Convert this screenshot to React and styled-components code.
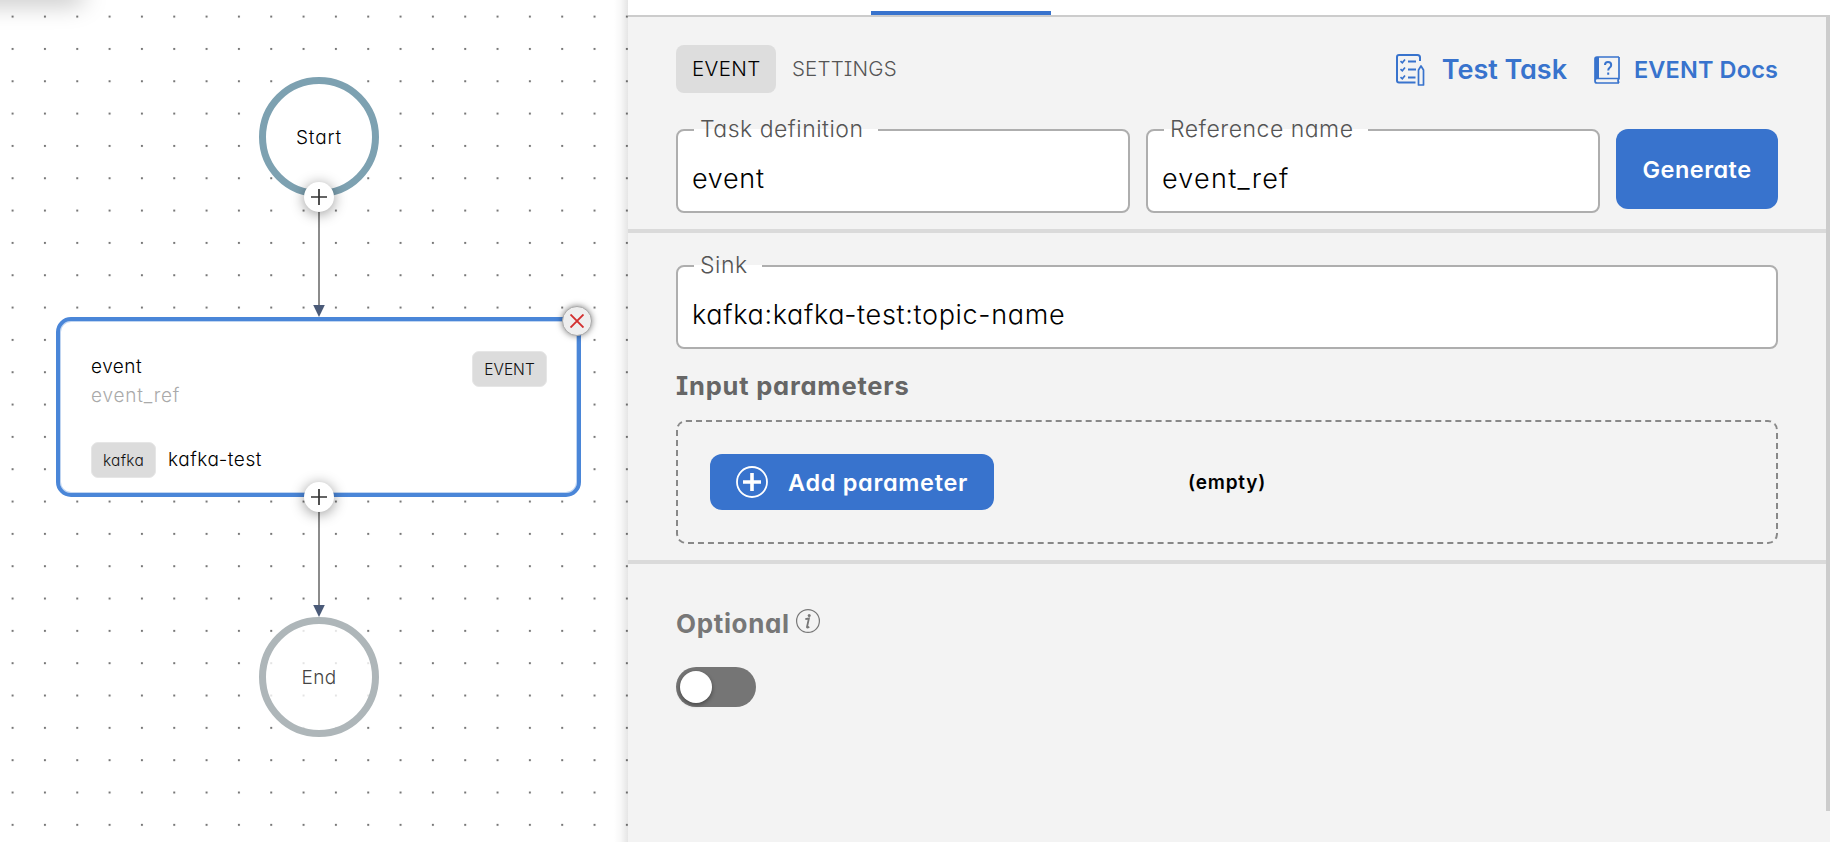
import React from "react";
import styled, { createGlobalStyle, css } from "styled-components";

const GlobalStyle = createGlobalStyle`
  * { box-sizing: border-box; }
  body {
    margin: 0;
    background: #fff;
    font-family: Inter, "Liberation Sans", sans-serif;
    font-feature-settings: "cv11", "cv08";
    -webkit-font-smoothing: antialiased;
  }
  button { font: inherit; font-feature-settings: inherit; border: 0; padding: 0; }
`;

const BLUE = "#3873cd";

const Page = styled.div`
  display: flex;
  width: 1830px;
  height: 842px;
  overflow: hidden;
`;

const tracked = css`
  letter-spacing: ${(p) => p.$track || 0}px;
  white-space: nowrap;
`;

/* ---------- workflow canvas ---------- */

const Canvas = styled.main`
  position: relative;
  flex: 0 0 628px;
  height: 842px;
  background: #fff;
  overflow: hidden;
`;

const DotGrid = styled.svg`
  position: absolute;
  inset: 0;
  width: 100%;
  height: 100%;
`;

const ToolbarShadow = styled.div`
  position: absolute;
  left: -40px;
  top: -20px;
  width: 124px;
  height: 20px;
  border-radius: 8px;
  box-shadow: 0 4px 24px rgba(0, 0, 0, 0.25);
`;

const CanvasEdge = styled.div`
  position: absolute;
  right: 0;
  top: 0;
  width: 14px;
  height: 100%;
  background: linear-gradient(to right, rgba(0, 0, 0, 0), rgba(0, 0, 0, 0.03) 50%, rgba(0, 0, 0, 0.1));
`;

const Terminal = styled.div`
  position: absolute;
  left: 259px;
  top: ${(p) => p.$top}px;
  width: 120px;
  height: 120px;
  display: flex;
  align-items: center;
  justify-content: center;
  border-radius: 50%;
  border: 7px solid ${(p) => p.$ring};
  background: ${(p) => p.$fill};
  color: ${(p) => p.$ink};
  font-size: 19px;
  font-weight: 350;
  ${tracked}
`;

const Arrow = styled.svg`
  position: absolute;
  left: 311px;
  top: ${(p) => p.$top}px;
`;

const AddNode = styled.button`
  position: absolute;
  left: 304px;
  top: ${(p) => p.$top}px;
  width: 30px;
  height: 30px;
  display: flex;
  align-items: center;
  justify-content: center;
  border-radius: 50%;
  background: #fff;
  box-shadow: 0 2px 14px rgba(0, 0, 0, 0.42);
`;

const TaskCard = styled.section`
  position: absolute;
  left: 56px;
  top: 317px;
  width: 525px;
  height: 180px;
  display: flex;
  flex-direction: column;
  justify-content: space-between;
  padding: 30px 30px 15px 31px;
  border: 4px solid #4a86d8;
  border-radius: 15px;
  background: #fff;
  box-shadow: inset 0 0 0 1px rgba(74, 134, 216, 0.35);
`;

const CardRow = styled.div`
  display: flex;
  align-items: ${(p) => p.$align || "center"};
  justify-content: ${(p) => p.$justify || "flex-start"};
  gap: 12px;
`;

const CardTitles = styled.div`
  display: flex;
  flex-direction: column;
  padding-top: 1px;
`;

const CardText = styled.div`
  color: ${(p) => p.$ink || "#000"};
  font-size: 19px;
  font-weight: 350;
  line-height: 29px;
  ${tracked}
`;

const SinkName = styled(CardText)`
  padding-bottom: 2px;
`;

const Chip = styled.div`
  display: flex;
  align-items: center;
  justify-content: center;
  width: ${(p) => p.$w}px;
  height: 36px;
  border: 1px solid #e6e6e6;
  border-radius: 7px;
  background: #dcdcdc;
  color: #111;
  font-size: 15.5px;
  font-weight: 350;
  ${tracked}
`;

const DeleteNode = styled.button`
  position: absolute;
  left: 562px;
  top: 306px;
  width: 30px;
  height: 30px;
  display: flex;
  align-items: center;
  justify-content: center;
  border-radius: 50%;
  border: 1px solid #aaa;
  background: #eee;
  box-shadow: 0 0 6px rgba(0, 0, 0, 0.5);
`;

/* ---------- details panel ---------- */

const Panel = styled.aside`
  flex: 1;
  display: flex;
  flex-direction: column;
  background: #f3f3f3;
`;

const TabStrip = styled.div`
  display: flex;
  align-items: flex-end;
  height: 17px;
  padding-left: 243px;
  background: #fff;
  border-bottom: 2px solid #ccc;
`;

const TabIndicator = styled.div`
  width: 180px;
  height: 4px;
  background: ${BLUE};
`;

const Scroller = styled.div`
  display: flex;
  flex: 1;
`;

const Body = styled.div`
  flex: 1;
  display: flex;
  flex-direction: column;
`;

const ScrollThumb = styled.div`
  width: 4px;
  height: 794px;
  background: #ccc;
`;

const Section = styled.section`
  display: flex;
  flex-direction: column;
  padding: ${(p) => p.$pad};
  border-bottom: ${(p) => (p.$last ? "0" : "4px solid #dadada")};
`;

const Toolbar = styled.div`
  display: flex;
  align-items: center;
  height: 48px;
  margin-bottom: 36px;
`;

const TabButton = styled.button`
  height: 48px;
  width: ${(p) => (p.$active ? 100 : 137)}px;
  padding: 0 0 1px 16px;
  text-align: left;
  border-radius: 8px;
  background: ${(p) => (p.$active ? "#ddd" : "transparent")};
  color: ${(p) => (p.$active ? "#000" : "#555")};
  font-size: 20.5px;
  font-weight: 350;
  ${tracked}
`;

const Links = styled.div`
  display: flex;
  align-items: center;
  margin-left: auto;
`;

const Link = styled.a`
  display: flex;
  align-items: center;
  padding-top: 1px;
  color: ${BLUE};
  font-size: ${(p) => p.$size}px;
  font-weight: 560;
  margin-left: ${(p) => p.$gap || 0}px;
  svg { margin-right: ${(p) => p.$iconGap}px; }
  ${tracked}
`;

const FieldRow = styled.div`
  display: flex;
  gap: 16px;
`;

const Field = styled.div`
  position: relative;
  display: flex;
  align-items: center;
  flex: 1;
  height: 84px;
  min-height: 84px;
  padding: 14px 14px 0;
  border: 2px solid #aeaeae;
  border-radius: 8px;
  background: #fff;
`;

const FieldLabel = styled.label`
  position: absolute;
  left: 16px;
  top: -2px;
  height: 2px;
  width: ${(p) => p.$w}px;
  padding-left: 6px;
  background: #fff;
  color: #555;
  font-size: 23px;
  font-weight: 350;
  line-height: 0;
  ${tracked}
`;

const FieldValue = styled.div`
  color: #000;
  font-size: 27px;
  font-weight: 350;
  ${tracked}
`;

const Primary = styled.button`
  display: flex;
  align-items: center;
  justify-content: center;
  width: ${(p) => p.$w}px;
  height: ${(p) => p.$h}px;
  padding-top: 1px;
  border-radius: 12px;
  background: ${BLUE};
  color: #fff;
  font-size: 23.5px;
  font-weight: 560;
  svg { margin: -1px 20px 0 0; }
  ${tracked}
`;

const Heading = styled.h3`
  margin: 0;
  color: ${(p) => p.$ink};
  font-size: ${(p) => p.$size}px;
  font-weight: 650;
  line-height: ${(p) => p.$lh}px;
  ${tracked}
`;

const ParamsHeading = styled(Heading)`
  height: 71px;
  padding-top: 1px;
`;

const ParamsBox = styled.div`
  display: flex;
  align-items: center;
  height: 124px;
  padding-left: 32px;
  border: 2px dashed #888;
  border-radius: 10px;
`;

const Empty = styled.div`
  margin-left: 194px;
  color: #000;
  font-size: 19px;
  font-weight: 600;
  ${tracked}
`;

const OptionalRow = styled.div`
  display: flex;
  align-items: flex-start;
  gap: 6px;
  height: 30px;
  margin-bottom: 28px;
`;

const Toggle = styled.div`
  width: 80px;
  height: 40px;
  padding: 4px;
  border-radius: 20px;
  background: #757575;
`;

const Knob = styled.div`
  width: 32px;
  height: 32px;
  border-radius: 50%;
  background: #fff;
  box-shadow: 0 2px 4px rgba(0, 0, 0, 0.4);
`;

const ArrowDown = ({ top }) => (
  <Arrow $top={top} width="16" height="106" viewBox="0 0 16 106">
    <path d="M8 0V96" stroke="#777" strokeWidth="1.7" />
    <path d="M2.2 94H13.8L8 106Z" fill="#4a5a78" />
  </Arrow>
);

const Plus = () => (
  <svg width="16" height="16" viewBox="0 0 16 16">
    <path d="M0 8H16M8 0V16" stroke="#333" strokeWidth="1.7" />
  </svg>
);

const ChecklistIcon = () => (
  <svg width="30" height="34" viewBox="0 0 30 34" fill="none" stroke={BLUE} strokeWidth="2">
    <path d="M25 8V4.5Q25 2 22.500 2H4Q2 2 2 4V27.500Q2 29.500 4 29.500H20.500" />
    <path d="M5.500 8.200L7.300 9.800L10 6.500M5.500 16.200L7.300 17.800L10 14.500M5.500 24.200L7.300 25.800L10 22.500" strokeWidth="1.700" />
    <path d="M13 8.500H21M13 16.500H21M13 24.500H20.500" />
    <path d="M23.500 17L26 13L28.500 17V32H23.500Z" strokeLinejoin="round" strokeWidth="1.700" />
  </svg>
);

const DocsIcon = () => (
  <svg width="26" height="28" viewBox="0 0 26 28" fill="none" stroke={BLUE} strokeWidth="1.700">
    <path d="M25 1H3Q1 1 1 3V25Q1 27 3 27H25M25 1V22.500H3Q1 22.500 1 25M25 22.500Q23 24.500 25 27" />
    <path d="M3 1V22" strokeWidth="4" />
    <path d="M11 9Q11 6 14 6Q17.200 6 17.200 8.900Q17.200 10.500 15.600 11.700Q14.200 12.800 14.200 14.500M14.200 16.600V18.800" strokeWidth="2" />
  </svg>
);

const CirclePlus = () => (
  <svg width="32" height="32" viewBox="0 0 32 32" fill="none" stroke="#fff">
    <circle cx="16" cy="16" r="15" strokeWidth="1.800" />
    <path d="M7 16H25M16 7V25" strokeWidth="3.600" />
  </svg>
);

const InfoIcon = () => (
  <svg width="24" height="24" viewBox="0 0 24 24" fill="none" stroke="#777">
    <circle cx="12" cy="12" r="11.400" strokeWidth="1.200" />
    <path d="M9.300 10.200L12.900 9.500L11 18Q10.800 19.300 13.300 17.800" strokeWidth="1.800" />
    <circle cx="13.200" cy="6.400" r="1.500" fill="#777" stroke="none" />
  </svg>
);

export default function App() {
  return (
    <Page>
      <GlobalStyle />
      <Canvas>
        <DotGrid>
          <defs>
            <pattern id="dots" x="11.6" y="15.6" width="32.33" height="32.33" patternUnits="userSpaceOnUse">
              <rect width="2" height="2" fill="#777" />
            </pattern>
          </defs>
          <rect width="100%" height="100%" fill="url(#dots)" />
        </DotGrid>
        <ToolbarShadow />
        <CanvasEdge />
        <Terminal $top={77} $ring="#7da1b1" $fill="#fff" $ink="#000" $track={0.85}>Start</Terminal>
        <Terminal $top={617} $ring="#aeb6b9" $fill="rgba(255,255,255,0.8)" $ink="#444" $track={0.4}>End</Terminal>
        <ArrowDown top={211} />
        <ArrowDown top={511} />
        <TaskCard>
          <CardRow $align="flex-start" $justify="space-between">
            <CardTitles>
              <CardText $track={0.5}>event</CardText>
              <CardText $ink="#aaa" $track={0.8}>event_ref</CardText>
            </CardTitles>
            <Chip $w={75}>EVENT</Chip>
          </CardRow>
          <CardRow>
            <Chip $w={65} $track={0.3}>kafka</Chip>
            <SinkName $track={0.55}>kafka-test</SinkName>
          </CardRow>
        </TaskCard>
        <AddNode $top={182}><Plus /></AddNode>
        <AddNode $top={482}><Plus /></AddNode>
        <DeleteNode>
          <svg width="14" height="14" viewBox="0 0 14 14">
            <path d="M0.500 0.500L13.500 13.500M13.500 0.500L0.500 13.500" stroke="#d32f2f" strokeWidth="1.900" />
          </svg>
        </DeleteNode>
      </Canvas>
      <Panel>
        <TabStrip><TabIndicator /></TabStrip>
        <Scroller>
          <Body>
            <Section $pad="28px 48px 16px">
              <Toolbar>
                <TabButton $active $track={0.35}>EVENT</TabButton>
                <TabButton $track={0.15}>SETTINGS</TabButton>
                <Links>
                  <Link $size={27} $iconGap={17} $track={-0.05}><ChecklistIcon />Test Task</Link>
                  <Link $size={23.5} $gap={27} $iconGap={14} $track={0.13}><DocsIcon />EVENT Docs</Link>
                </Links>
              </Toolbar>
              <FieldRow>
                <Field><FieldLabel $w={184} $track={0.5}>Task definition</FieldLabel><FieldValue $track={0.7}>event</FieldValue></Field>
                <Field><FieldLabel $w={204} $track={0.5}>Reference name</FieldLabel><FieldValue $track={1.25}>event_ref</FieldValue></Field>
                <Primary $w={162} $h={80} $track={0.48}>Generate</Primary>
              </FieldRow>
            </Section>
            <Section $pad="32px 48px 16px">
              <Field><FieldLabel $w={68} $track={0.5}>Sink</FieldLabel><FieldValue $track={0.67}>kafka:kafka-test:topic-name</FieldValue></Field>
              <ParamsHeading $ink="#666" $size={25.5} $lh={71} $track={0.8}>Input parameters</ParamsHeading>
              <ParamsBox>
                <Primary $w={284} $h={56} $track={0.68}><CirclePlus />Add parameter</Primary>
                <Empty $track={0.8}>(empty)</Empty>
              </ParamsBox>
            </Section>
            <Section $last $pad="45px 48px 0">
              <OptionalRow>
                <Heading $ink="#777" $size={26} $lh={30} $track={0.65}>Optional</Heading>
                <InfoIcon />
              </OptionalRow>
              <Toggle><Knob /></Toggle>
            </Section>
          </Body>
          <ScrollThumb />
        </Scroller>
      </Panel>
    </Page>
  );
}
